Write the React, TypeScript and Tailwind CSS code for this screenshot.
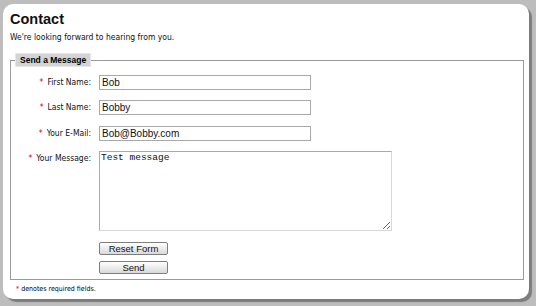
export default function App() {
  const rows = [
    { label: 'First Name:', value: 'Bob' },
    { label: 'Last Name:', value: 'Bobby' },
    { label: 'Your E-Mail:', value: 'Bob@Bobby.com' },
  ]

  return (
    <div className="w-[536px] h-[306px] bg-[#bdbdbd] pt-[4px] pl-[3px] font-['DejaVu_Sans_Condensed',sans-serif] text-[#111]">
      <div className="w-[526px] h-[295px] bg-white rounded-[10px] shadow-[3px_3px_1px_#7c7c7c] pl-[7px] pr-[5px] pt-[7px] flex flex-col">
        <h1 className="text-[14.5px] font-bold leading-[17px] font-['Liberation_Sans',sans-serif]">Contact</h1>
        <p className="text-[8.5px] leading-[11px] mt-[4px]">We're looking forward to hearing from you.</p>

        {/* Form */}
        <fieldset className="border border-[#9a9a9a] mt-[10px] w-[514px] px-0 pt-[8px] pb-[5px]">
          <legend className="ml-[4px] pl-[4px] pr-[4px] bg-[#d3d3d3] border border-[#e6e6e6] text-[8.5px] font-bold leading-[12px] text-black font-['Liberation_Sans',sans-serif]">
            Send a Message
          </legend>

          <div className="grid grid-cols-[80px_1fr] gap-x-[8px] gap-y-[10.3px] items-center">
            {rows.map((r) => (
              <div key={r.label} className="contents">
                <label className="text-right text-[8.5px] leading-[15px]">
                  <span className="text-[#d40000] mr-[4px]">*</span>
                  {r.label}
                </label>
                <input
                  readOnly
                  value={r.value}
                  className="w-[212px] h-[15px] border border-[#a9a9a9] px-[2px] text-[10px] font-['Liberation_Sans',sans-serif] outline-none"
                />
              </div>
            ))}
            <label className="text-right text-[8.5px] leading-[15px] self-start">
              <span className="text-[#d40000] mr-[4px]">*</span>
              Your Message:
            </label>
            <textarea
              readOnly
              value="Test message"
              className="w-[293px] h-[80px] border border-[#a9a9a9] border-r-[#d8d8d8] border-b-[#d8d8d8] px-[1px] py-0 text-[9.5px] leading-[12px] font-['Liberation_Mono',monospace] outline-none resize"
            />
            <div />
            <div className="flex flex-col gap-[6px] mt-[0.7px]">
              <button className="w-[69px] h-[13px] border border-[#7e7e7e] rounded-[2px] bg-gradient-to-b from-white to-[#d9d9d9] text-[9.5px] leading-[11px] font-['Liberation_Sans',sans-serif]">
                Reset Form
              </button>
              <button className="w-[69px] h-[13px] border border-[#7e7e7e] rounded-[2px] bg-gradient-to-b from-white to-[#d9d9d9] text-[9.5px] leading-[11px] font-['Liberation_Sans',sans-serif]">
                Send
              </button>
            </div>
          </div>
        </fieldset>

        <p className="text-[7px] leading-[10px] mt-[4px] ml-[6px] text-black">
          <span className="text-[#d40000] mr-[2px]">*</span>denotes required fields.
        </p>
      </div>
    </div>
  )
}
